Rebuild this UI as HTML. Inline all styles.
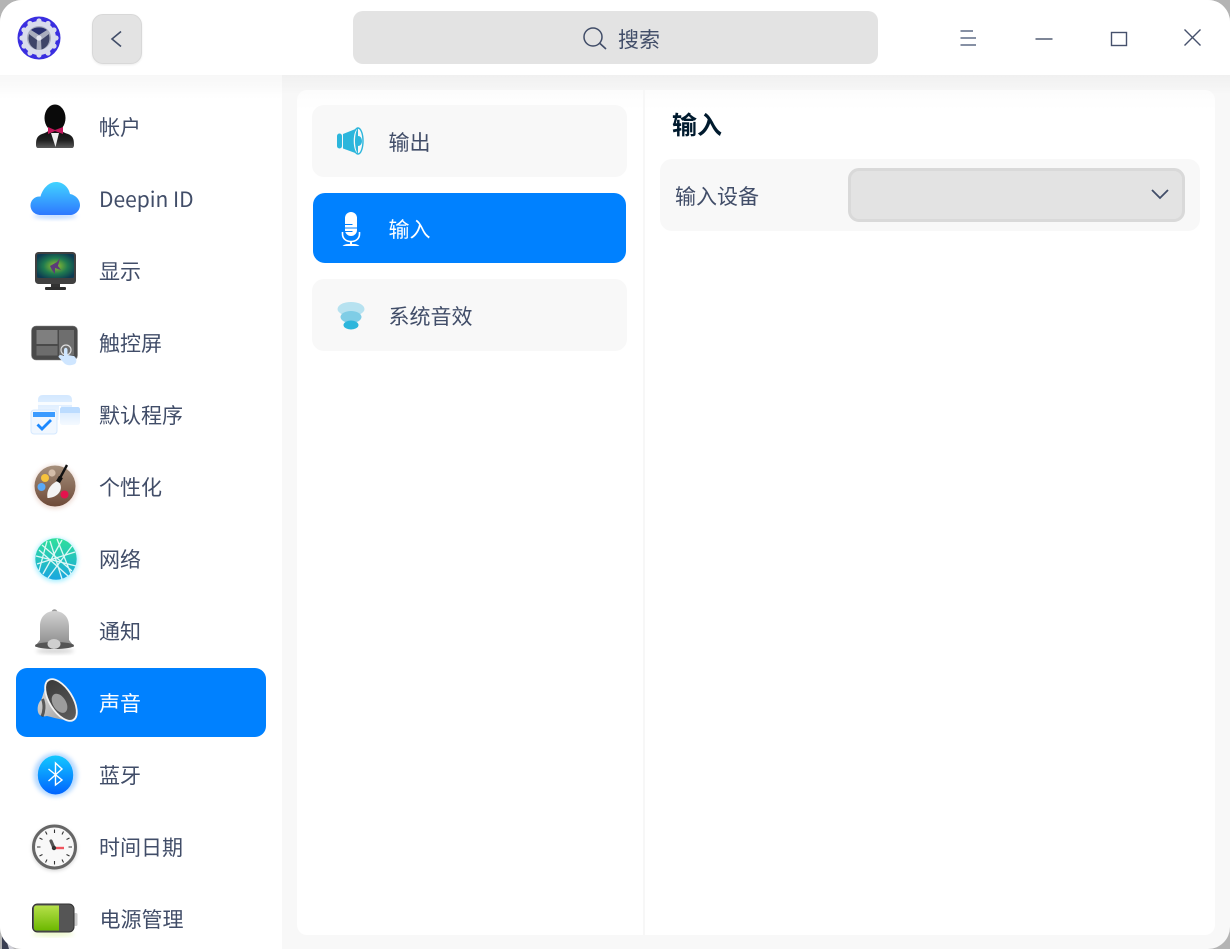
<!DOCTYPE html>
<html lang="zh-CN"><head><meta charset="utf-8"><title>控制中心</title>
<style>
*{box-sizing:border-box;margin:0;padding:0}
html,body{width:1230px;height:949px;overflow:hidden;background:#b4b4b4}
body{position:relative;font-family:"Noto Sans CJK SC","Liberation Sans",sans-serif;color:#414d68}
#win{position:absolute;left:0;top:0;width:1230px;height:949px;border-radius:22px;background:#f8f8f8;overflow:hidden}
#head{position:absolute;left:0;top:0;width:1230px;height:75px;background:#fff}
#side{position:absolute;left:0;top:75px;width:282px;height:874px;background:linear-gradient(#f7f7f7 0,#fff 24px)}
#gap{position:absolute;left:282px;top:75px;width:948px;height:20px;background:linear-gradient(#f0f0f0,#f8f8f8)}
#panel{position:absolute;left:297px;top:90px;width:918px;height:845px;background:linear-gradient(#fcfcfc,#fff 20px);border-radius:10px}
#div{position:absolute;left:643px;top:90px;width:2px;height:845px;background:#f7f7f7}
.t{position:absolute;font-size:21px;line-height:30px;white-space:nowrap}
.sel{position:absolute;left:16px;top:668px;width:250px;height:69px;background:#0081ff;border-radius:11px}
.card{position:absolute;left:312px;width:315px;height:72px;background:#f8f8f8;border-radius:12px}
.sel2{position:absolute;left:313px;top:193px;width:313px;height:70px;background:#0081ff;border-radius:12px}
svg{position:absolute;left:0;top:0;overflow:visible}
</style></head><body>
<svg width="30" height="30" style="left:0;top:919px"><path d="M2 14L12 30H2Z" fill="#3a3f52"/><path d="M6 20L14 30H9Z" fill="#d0d0d8"/></svg>
<div id="win">
<div id="head"></div><div id="side"></div><div id="gap"></div><div id="panel"></div><div id="div"></div>
<div style="position:absolute;left:92px;top:14px;width:50px;height:50px;border-radius:11px;background:#e3e3e3;border:1px solid #d8d8d8;box-shadow:0 1px 2px rgba(0,0,0,.08)"></div>
<div style="position:absolute;left:353px;top:11px;width:525px;height:53px;border-radius:10px;background:#e3e3e3"></div>
<div class="sel"></div>
<div class="card" style="top:105px"></div><div class="sel2"></div><div class="card" style="top:279px"></div>
<div style="position:absolute;left:660px;top:159px;width:540px;height:72px;background:#f8f8f8;border-radius:12px"></div>
<div style="position:absolute;left:848px;top:168px;width:337px;height:54px;background:#e3e3e3;border:3px solid #d9d9d9;border-radius:11px"></div>

<div class="t" style="left:99px;top:112px">帐户</div>
<div class="t" style="left:99px;top:184px">Deepin ID</div>
<div class="t" style="left:99px;top:256px">显示</div>
<div class="t" style="left:99px;top:328px">触控屏</div>
<div class="t" style="left:99px;top:400px">默认程序</div>
<div class="t" style="left:99px;top:472px">个性化</div>
<div class="t" style="left:99px;top:544px">网络</div>
<div class="t" style="left:99px;top:616px">通知</div>
<div class="t" style="left:99px;top:688px;color:#fff">声音</div>
<div class="t" style="left:99px;top:760px">蓝牙</div>
<div class="t" style="left:99px;top:832px">时间日期</div>
<div class="t" style="left:99.500px;top:904px">电源管理</div>
<div class="t" style="left:618px;top:24px">搜索</div>
<div class="t" style="left:388.500px;top:127px">输出</div>
<div class="t" style="left:388.500px;top:214px;color:#fff">输入</div>
<div class="t" style="left:388.500px;top:301px">系统音效</div>
<div class="t" style="left:672px;top:109px;color:#001a2e;font-weight:700;font-size:25px">输入</div>
<div class="t" style="left:675px;top:181px">输入设备</div>

<svg width="1230" height="949" viewBox="0 0 1230 949" fill="none">
<defs>
<linearGradient id="cl" x1="0" y1="0" x2="0" y2="1"><stop offset="0" stop-color="#42d4ff"/><stop offset="1" stop-color="#2e78ff"/></linearGradient>
<linearGradient id="bt" x1="0" y1="0" x2="0" y2="1"><stop offset="0" stop-color="#13c8ff"/><stop offset="1" stop-color="#0063ff"/></linearGradient>
<linearGradient id="suit" x1="0" y1="0" x2="0" y2="1"><stop offset="0" stop-color="#0c0c0c"/><stop offset=".6" stop-color="#222"/><stop offset="1" stop-color="#5a5a5a"/></linearGradient>
<linearGradient id="net" x1="0" y1="0" x2="0" y2="1"><stop offset="0" stop-color="#2fe09a"/><stop offset="1" stop-color="#1aa6e0"/></linearGradient>
<linearGradient id="bell" x1="0" y1="0" x2="0" y2="1"><stop offset="0" stop-color="#d2d2d2"/><stop offset="1" stop-color="#8a8a8a"/></linearGradient>
<linearGradient id="bat" x1="0" y1="0" x2="0" y2="1"><stop offset="0" stop-color="#b6e04a"/><stop offset="1" stop-color="#6cb800"/></linearGradient>
<radialGradient id="mon" cx=".5" cy=".5" r=".6"><stop offset="0" stop-color="#9cc52c"/><stop offset=".55" stop-color="#1f7a50"/><stop offset="1" stop-color="#0d3b52"/></radialGradient>
<linearGradient id="pal" x1="0" y1="0" x2="0" y2="1"><stop offset="0" stop-color="#a58f7b"/><stop offset="1" stop-color="#6e4a38"/></linearGradient>
<linearGradient id="win2" x1="0" y1="0" x2="0" y2="1"><stop offset="0" stop-color="#d3e8ff"/><stop offset="1" stop-color="#f4f9ff"/></linearGradient>
<linearGradient id="horn" x1="0" y1="0" x2="1" y2="1"><stop offset="0" stop-color="#e2e2e2"/><stop offset="1" stop-color="#9a9a9a"/></linearGradient>
<linearGradient id="bz" x1="0" y1="0" x2="0" y2="1"><stop offset="0" stop-color="#3a3a3a"/><stop offset="1" stop-color="#5c5c5c"/></linearGradient>
<filter id="b1" x="-40%" y="-40%" width="180%" height="180%"><feGaussianBlur stdDeviation="2"/></filter>
</defs>

<!-- logo -->
<circle cx="39" cy="38" r="21.500" fill="#3a2ee0"/>
<circle cx="39" cy="38" r="17" fill="#d9dcec"/>
<g fill="#d9dcec"><circle cx="39" cy="21" r="2.600"/><circle cx="48" cy="23.500" r="2.600"/><circle cx="54" cy="30" r="2.600"/><circle cx="56" cy="38" r="2.600"/><circle cx="54" cy="46" r="2.600"/><circle cx="48" cy="53" r="2.600"/><circle cx="39" cy="55" r="2.600"/><circle cx="30" cy="53" r="2.600"/><circle cx="24" cy="46" r="2.600"/><circle cx="22" cy="38" r="2.600"/><circle cx="24" cy="30" r="2.600"/><circle cx="30" cy="23.500" r="2.600"/></g>
<circle cx="39" cy="38" r="12" fill="#a9adbd"/>
<path d="M28.500 38C28.500 44 32 48 36.500 49.500L37 40L29 34Z" fill="#3e4468"/>
<path d="M49.500 38C49.500 44 46 48 41.500 49.500L41 40L49 34Z" fill="#3e4468"/>
<path d="M31 30C35 26.500 43 26.500 47 30L39 35Z" fill="#2a3170"/>
<circle cx="39" cy="38" r="2.600" fill="#e4e6f0"/>

<!-- back -->
<path d="M121 31.500L112 39L121 46.500" stroke="#414d68" stroke-width="1.600"/>
<!-- search -->
<circle cx="593" cy="37" r="9" stroke="#414d68" stroke-width="1.500"/>
<path d="M600 43.500L606 49" stroke="#414d68" stroke-width="1.600"/>
<!-- window buttons -->
<path d="M960.500 31H973M960.500 38H976M960.500 45H976" stroke="#5f6b85" stroke-width="1.500"/>
<path d="M1035.500 39H1052.500" stroke="#6b7488" stroke-width="1.800"/>
<rect x="1111.500" y="32.500" width="15" height="13" stroke="#46516c" stroke-width="1.400"/>
<path d="M1184.500 29.500L1200.500 45.500M1200.500 29.500L1184.500 45.500" stroke="#46516c" stroke-width="1.400"/>
<!-- select arrow -->
<path d="M1152 190L1160 198L1168 190" stroke="#414d68" stroke-width="1.800"/>

<!-- account -->
<ellipse cx="55" cy="118" rx="10.500" ry="13.500" fill="#0a0a0a"/>
<path d="M36 145C36 139 37 136 42 134C45 133 48 132 50 129H60C62 132 65 133 68 134C73 136 74 139 74 145C74 147 73 148 72 148H38C37 148 36 147 36 145Z" fill="url(#suit)"/>
<path d="M51 133H59L55.500 147Z" fill="#eee"/>
<path d="M48 127L55 130L63 127V134L55 131L48 134Z" fill="#c2185b"/>

<!-- cloud -->
<ellipse cx="55" cy="216" rx="22" ry="3" fill="#4f97ff" opacity=".35" filter="url(#b1)"/>
<path d="M41 215C34 215 30.500 210 30.500 205.500C30.500 200 35 196 40.500 196.500C43 188 49 182 56 182C63 182 68.500 187 70 194C76 195 80 200 80 205C80 211 75 215 70 215Z" fill="url(#cl)"/>

<!-- display -->
<rect x="35" y="252" width="41" height="32" rx="3.500" fill="#404040"/>
<rect x="37" y="254" width="37" height="24" rx="1.500" fill="url(#mon)"/>
<path d="M50 266L57 262L60 258L58 266L61 270L55 268L55 274L52 270Z" fill="#5c3b78"/>
<rect x="51" y="284" width="9" height="3" fill="#333"/><rect x="45" y="287" width="21" height="3" rx="1" fill="#2e2e2e"/>

<!-- touch -->
<rect x="31.500" y="326" width="46" height="34" rx="4.500" fill="#4a4a4a" stroke="#8a8a8a" stroke-width=".6"/>
<rect x="36.500" y="330" width="21" height="14" fill="#7f7f7f"/><rect x="36.500" y="346" width="21" height="9.500" fill="#6d6d6d"/><rect x="59" y="330" width="15" height="25" fill="#6e6e6e"/>
<circle cx="66" cy="350" r="5" stroke="#ddd" stroke-width="1.200"/>
<path d="M64 350C64 347 67.500 347 67.500 350V355L74 356C77 358 77 362 75 364C71 366 66 365.500 64 363L58.500 357C58.500 354.500 61 354.500 64 356Z" fill="#cfe6ff"/>

<!-- default apps -->
<path d="M38 400C38 396.500 40 395 43 395H67C70 395 72 396.500 72 400V420H38Z" fill="url(#win2)"/>
<rect x="38" y="402" width="34" height="3" fill="#fff" opacity=".8"/>
<rect x="59" y="406" width="2" height="19" fill="#fff"/>
<rect x="60" y="407" width="20" height="18" rx="2.500" fill="url(#win2)"/>
<path d="M60 409.500C60 408 61 407 62.500 407H77.500C79 407 80 408 80 409.500V413H60Z" fill="#bcdcff"/>
<rect x="31" y="410" width="26" height="24" rx="3" fill="#f0f7ff" stroke="#d5e8ff"/>
<rect x="33" y="412" width="22" height="5" fill="#3b9bff"/>
<path d="M37.500 424.500L42 429L51 420" stroke="#1a88ff" stroke-width="2.800"/>

<!-- personalise -->
<circle cx="55" cy="487" r="22" fill="#d9b4a5" opacity=".45" filter="url(#b1)"/>
<circle cx="55" cy="486" r="20.500" fill="url(#pal)"/>
<circle cx="45" cy="478" r="4" fill="#f7c33c"/><circle cx="52" cy="473" r="3.600" fill="#d4bda9"/><circle cx="41.500" cy="487" r="4" fill="#5aa9f7"/><circle cx="64.500" cy="494.500" r="4" fill="#e4134d"/>
<path d="M47.500 498C46 490 51 484 57.500 481C62 484 62 490 58 494C55 497 50.500 498 47.500 498Z" fill="#f4f4f4"/>
<path d="M58 482L61 477" stroke="#111" stroke-width="4.500"/>
<path d="M60 478L67 465" stroke="#111" stroke-width="2.400"/>

<!-- network -->
<circle cx="56" cy="560" r="22" fill="#2fd8ff" opacity=".4" filter="url(#b1)"/>
<circle cx="56" cy="559" r="20.700" fill="url(#net)"/>
<path d="M36 556L76 566M57 539L71 574M47 541L39 571M62 540L43 574M37 564L75 552M50 541L62 579M72 546L48 578M39 550L68 576M42 545L72 571" stroke="#f2fdfc" stroke-width="1.300" opacity=".9"/>

<!-- bell -->
<ellipse cx="55" cy="651" rx="19" ry="2.500" fill="#000" opacity=".18" filter="url(#b1)"/>
<circle cx="54.500" cy="612" r="2.800" fill="#999"/>
<path d="M40 640V626C40 617 46 611 54.500 611C63 611 69 617 69 626V640C70.500 642 72.500 644 74 647H35C36.500 644 38.500 642 40 640Z" fill="url(#bell)"/>
<ellipse cx="54.500" cy="645.500" rx="19.500" ry="3.500" fill="#555"/>
<ellipse cx="54" cy="644" rx="6.500" ry="5" fill="#cfcfcf"/>

<!-- sound -->
<path d="M48 680C44 690 43 696 41 700C38 703 37 708 38 712C39 716 43 717 47 716C55 718 65 721 73 720Z" fill="url(#horn)"/>
<path d="M42.500 699C45 705 44 712 42 716.500" stroke="#333" stroke-width="3" opacity=".75"/>
<g transform="rotate(-32 61 700)"><ellipse cx="61" cy="700" rx="11.500" ry="23.500" fill="url(#bz)" stroke="#f2f2f2" stroke-width="1.800"/><ellipse cx="58" cy="702" rx="6.500" ry="10.500" fill="#9c9c9c"/></g>

<!-- bluetooth -->
<circle cx="55.500" cy="775" r="22" fill="#79b9ff" opacity=".55" filter="url(#b1)"/>
<ellipse cx="55.500" cy="775" rx="17.700" ry="19.500" fill="url(#bt)"/>
<path d="M48.500 769L62 780L55.500 785V763L62 769L48.500 781" stroke="#fff" stroke-width="1.400"/>

<!-- clock -->
<circle cx="54.500" cy="848.500" r="22" fill="#000" opacity=".2" filter="url(#b1)"/>
<circle cx="54.500" cy="847" r="21" fill="#f8f8f8" stroke="#666" stroke-width="3"/>
<path d="M54.500 829.500V833M54.500 861V864.500M37 847H40.500M68.500 847H72M45.500 831.500L47 834.500M62 859.500L63.500 862.500M63.500 831.500L62 834.500M47 859.500L45.500 862.500M39.500 838L42.500 839.500M66.500 854.500L69.500 856M69.500 838L66.500 839.500M42.500 854.500L39.500 856" stroke="#333" stroke-width="1.100"/>
<path d="M54 848L51 841" stroke="#555" stroke-width="3.200" stroke-linecap="round"/>
<path d="M55 848H64" stroke="#f0555f" stroke-width="2.400"/>
<circle cx="54" cy="848" r="2.200" fill="#333"/>

<!-- battery -->
<rect x="74" y="913" width="3.500" height="13" rx="1.500" fill="#ccc"/>
<ellipse cx="53" cy="934" rx="21" ry="2" fill="#c8ea66" opacity=".45" filter="url(#b1)"/>
<rect x="32.500" y="904" width="41.500" height="28" rx="5" fill="#555" stroke="#333" stroke-width="1"/>
<path d="M34 908C34 906.500 35 905.500 36.500 905.500H59V930.500H36.500C35 930.500 34 929.500 34 928Z" fill="url(#bat)"/>

<!-- output icon -->
<rect x="337" y="133.500" width="5" height="15" rx="2.500" fill="#2cb6dc"/>
<path d="M343 134L358 128V154L343 148.500Z" fill="#2cb6dc"/>
<ellipse cx="358" cy="141" rx="5" ry="13" fill="#f8f8f8" stroke="#2cb6dc" stroke-width="1.400"/>
<path d="M358 128C354 133 354 149 358 154Z" fill="#2cb6dc"/>
<ellipse cx="358.500" cy="141" rx="3.500" ry="5" fill="#2cb6dc"/>

<!-- mic icon -->
<rect x="345" y="212" width="12" height="24" rx="6" fill="#fff"/>
<path d="M345 224.500H352.500M345 228H357M345 231.500H352.500" stroke="#0081ff" stroke-width="1"/>
<path d="M342.500 232V234C342.500 238.500 346 241.500 351 241.500C356 241.500 359.500 238.500 359.500 234V232" stroke="#fff" stroke-width="1.600"/>
<path d="M351 241V245" stroke="#fff" stroke-width="2"/>
<path d="M344 245.500C346 244 356 244 358 245.500Z" fill="#fff" stroke="#fff" stroke-width="1"/>

<!-- sys sound icon -->
<ellipse cx="351" cy="309" rx="13.500" ry="7" fill="#b7e2f0"/>
<ellipse cx="351" cy="317" rx="10.500" ry="6" fill="#7fcde6"/>
<ellipse cx="351" cy="325" rx="7.500" ry="4.500" fill="#2cb6dc"/>
</svg>
</div>
</body></html>
